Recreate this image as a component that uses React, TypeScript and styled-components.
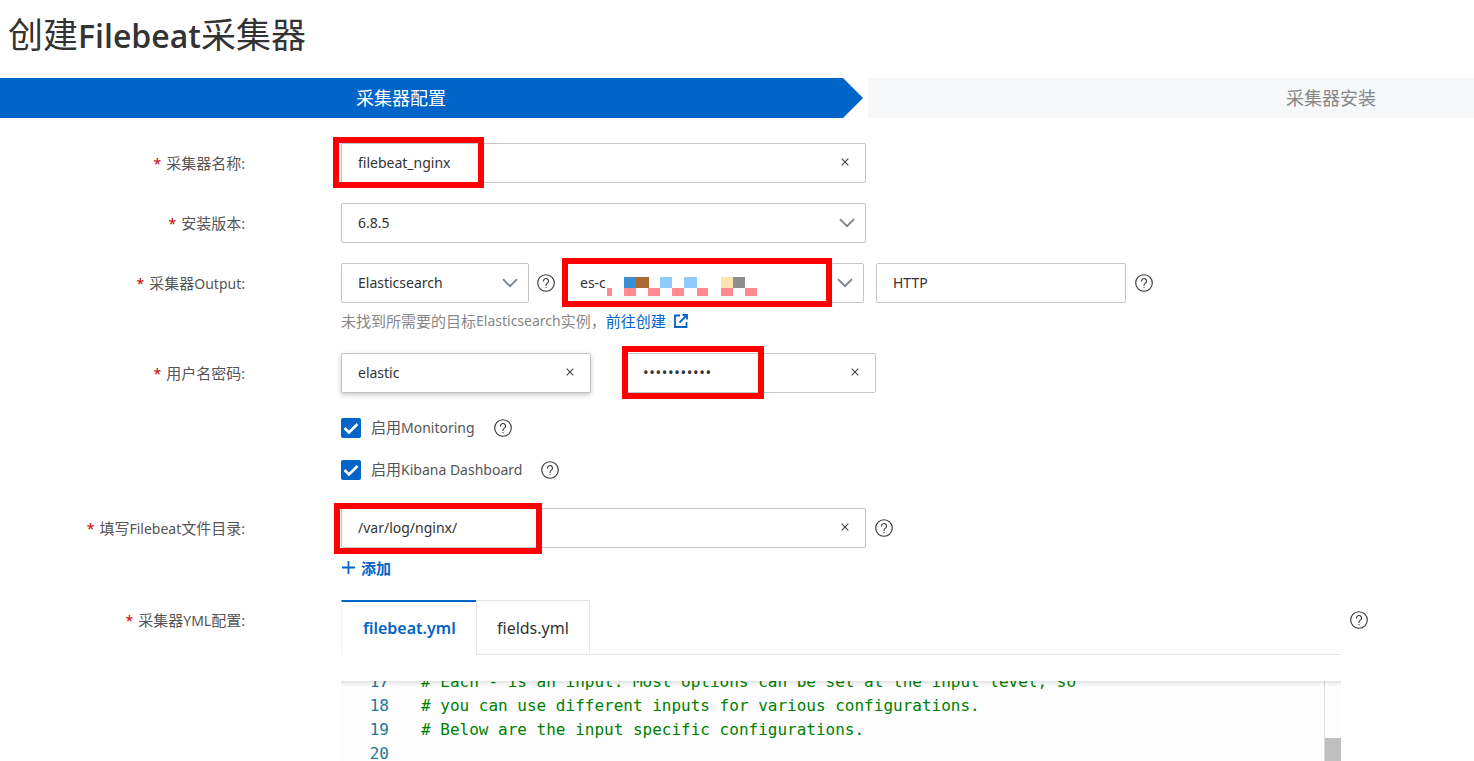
import { FC, ReactNode } from 'react'
import styled, { createGlobalStyle } from 'styled-components'

const GlobalStyle = createGlobalStyle`
    html, body {
        margin: 0;
        height: 761px;
        overflow: hidden;
        background: white;
        font-family: "Noto Sans", "Noto Sans CJK SC", sans-serif;
        color: #333;
    }
`

const Title = styled.h1`
    margin: 0;
    height: 78px;
    padding: 12px 0 0 8px;
    box-sizing: border-box;
    font-family: "Open Sans", "Noto Sans CJK SC", sans-serif;
    font-size: 35px;
    line-height: 46px;
    font-weight: 400;
    color: #333;
`

const TitleLatin = styled.span`
    font-size: 32px;
    font-weight: 600;
`

const Cjk = styled.span`
    font-size: 15px;
`

const Steps = styled.div`
    display: flex;
    gap: 5px;
    height: 40px;
`

const ActiveStep = styled.div`
    width: 863px;
    padding-left: 356px;
    box-sizing: border-box;
    background: #0064c8;
    color: white;
    font-size: 18px;
    line-height: 40px;
    clip-path: polygon(0 0, 843px 0, 100% 50%, 843px 100%, 0 100%);
`

const PendingStep = styled.div`
    flex: 1;
    padding-left: 418px;
    background: #f7f8fa;
    color: #888;
    font-size: 18px;
    line-height: 40px;
`

const Form = styled.div`
    padding-top: 25px;
`

const Row = styled.div<{ $mb: number }>`
    display: grid;
    grid-template-columns: 245px 1fr;
    column-gap: 96px;
    height: 40px;
    margin-bottom: ${p => p.$mb}px;
`

const Label = styled.div`
    height: 40px;
    text-align: right;
    font-size: 14px;
    line-height: 40px;
    color: #555;
`

const Star = styled.span`
    color: #c80000;
    margin-right: 5px;
`

const Controls = styled.div`
    display: flex;
    align-items: center;
`

const Field = styled.div<{ $width: number, $ml?: number, $raised?: boolean }>`
    position: relative;
    display: flex;
    align-items: center;
    justify-content: space-between;
    width: ${p => p.$width}px;
    height: 40px;
    margin-left: ${p => p.$ml || 0}px;
    padding: 0 16px 2px 16px;
    box-sizing: border-box;
    border: 1px solid #c0c6cc;
    border-radius: 2px;
    background: white;
    font-size: 14px;
    color: #333;
    box-shadow: ${p => p.$raised ? '0 2px 5px rgba(0, 0, 0, 0.22)' : 'none'};
`

const Dots = styled.span`
    font-size: 15px;
    letter-spacing: 0.6px;
`

const RedBox = styled.div<{ $left: number, $top: number, $width: number, $height: number }>`
    position: absolute;
    left: ${p => p.$left}px;
    top: ${p => p.$top}px;
    width: ${p => p.$width}px;
    height: ${p => p.$height}px;
    box-sizing: border-box;
    border: 6px solid #ff0000;
`

const Mosaic = styled.svg`
    position: absolute;
    left: 2px;
    top: -1px;
`

const HelpSlot = styled.span<{ $ml: number }>`
    display: flex;
    margin-left: ${p => p.$ml}px;
`

const Hint = styled.div`
    height: 20px;
    margin: 8px 0 22px 341px;
    display: flex;
    align-items: center;
    font-size: 14px;
    line-height: 20px;
    color: #888;
`

const Link = styled.span`
    color: #0064c8;
    margin-right: 8px;
`

const CheckRow = styled.div<{ $mb: number }>`
    display: flex;
    align-items: center;
    height: 21px;
    margin: 0 0 ${p => p.$mb}px 341px;
    font-size: 14px;
    color: #555;
`

const CheckBox = styled.span`
    display: flex;
    align-items: center;
    justify-content: center;
    width: 20px;
    height: 20px;
    margin-right: 10px;
    border-radius: 2px;
    background: #0064c8;
`

const CheckText = styled.span`
    margin-top: -2px;
`

const AddButton = styled.div`
    display: flex;
    align-items: center;
    gap: 6px;
    height: 20px;
    margin: 9px 0 23px 342px;
    font-size: 15px;
    font-weight: 600;
    color: #0064c8;
`

const YmlRow = styled.div`
    display: grid;
    grid-template-columns: 245px 1000px 18px;
    column-gap: 96px;
`

const YmlBody = styled.div`
    grid-column: 2;
`

const YmlHelp = styled.div`
    grid-column: 3;
    margin-left: -87px;
    padding-top: 11px;
`

const Tabs = styled.div`
    display: flex;
    height: 55px;
    border-bottom: 1px solid #e3e5e8;
    box-sizing: border-box;
`

const Tab = styled.div<{ $active?: boolean, $width: number }>`
    width: ${p => p.$width}px;
    height: 55px;
    box-sizing: border-box;
    padding-left: ${p => p.$active ? 21 : 20}px;
    line-height: ${p => p.$active ? 52 : 54}px;
    font-size: 16px;
    font-weight: ${p => p.$active ? 600 : 400};
    color: ${p => p.$active ? '#0064c8' : '#333'};
    background: white;
    border-left: 1px solid ${p => p.$active ? '#f0f1f3' : '#e3e5e8'};
    border-top: ${p => p.$active ? '2px solid #0064c8' : '1px solid #e3e5e8'};
    border-bottom: ${p => p.$active ? 'none' : '1px solid #e3e5e8'};
    border-right: ${p => p.$active ? 'none' : '1px solid #e3e5e8'};
`

const Editor = styled.div`
    position: relative;
    display: flex;
    height: 80px;
    margin-top: 26px;
    overflow: hidden;
    background: #fdfdfd;
`

const EditorShadow = styled.div`
    position: absolute;
    left: 0;
    right: 0;
    top: 0;
    height: 5px;
    background: linear-gradient(rgba(0, 0, 0, 0.1), rgba(0, 0, 0, 0));
`

const Lines = styled.div`
    flex: 1;
    margin-top: -11px;
    font-family: "DejaVu Sans Mono", monospace;
    font-size: 16px;
    line-height: 24px;
`

const Line = styled.div`
    display: flex;
    height: 24px;
    white-space: pre;
`

const LineNumber = styled.span`
    width: 48px;
    margin-right: 32px;
    text-align: right;
    color: #237893;
`

const Comment = styled.span`
    color: #008000;
`

const ScrollTrack = styled.div`
    width: 17px;
    box-sizing: border-box;
    padding-top: 57px;
    border-left: 1px solid #dcdcdc;
`

const ScrollThumb = styled.div`
    height: 40px;
    background: #bfbfbf;
`

const ChevronIcon = styled.svg`
    margin-right: -6px;
    margin-top: 2px;
`

const Help: FC = () => (
    <svg width="18" height="18" viewBox="0 0 18 18" fill="none" stroke="#333" strokeWidth="1.1">
        <circle cx="9" cy="9" r="8.3" />
        <path d="M6.5 7a2.5 2.5 0 1 1 3.9 2.1c-.9.6-1.4 1.1-1.4 2.3" strokeLinecap="round" />
        <circle cx="9" cy="13.6" r=".7" fill="#333" stroke="none" />
    </svg>
)

const Chevron: FC = () => (
    <ChevronIcon width="16" height="10" viewBox="0 0 16 10" fill="none" stroke="#77848f" strokeWidth="1.8">
        <path d="M1 1.2l7 7 7-7" />
    </ChevronIcon>
)

const Clear: FC = () => (
    <svg width="8" height="8" viewBox="0 0 8 8" fill="none" stroke="#444" strokeWidth="1.1">
        <path d="M.7.7l6.6 6.6M7.3.7L.7 7.3" />
    </svg>
)

const Check: FC = () => (
    <svg width="16" height="12" viewBox="0 0 16 12" fill="none" stroke="white" strokeWidth="2.6">
        <path d="M1.500 6l4.500 4.500 8.500-8.500" />
    </svg>
)

const ExternalLink: FC = () => (
    <svg width="14" height="14" viewBox="0 0 14 14" fill="none" stroke="#0064c8" strokeWidth="1.8">
        <path d="M6 1.5H1v11.5h11.500V8" />
        <path d="M5.500 8.500L13 1M8.500 1H13v4.500" />
    </svg>
)

const Plus: FC = () => (
    <svg width="13" height="13" viewBox="0 0 13 13" stroke="#0064c8" strokeWidth="1.8">
        <path d="M6.500 0v13M0 6.500h13" />
    </svg>
)

// blurred out instance id in the screenshot, coords are relative to the field
const mosaic = [
    [58, 14, 12, 11, '#3a8fd0'], [70, 14, 13, 11, '#a96a33'], [94, 14, 12, 11, '#8ecbff'],
    [118, 14, 13, 11, '#8ecbff'], [155, 14, 12, 11, '#fde4ae'], [167, 14, 12, 11, '#8e8e8c'],
    [41, 25, 5, 8, '#ff8a8f'], [58, 25, 12, 8, '#ff8a8f'], [82, 25, 12, 8, '#ff8a8f'],
    [106, 25, 12, 8, '#ff8a8f'], [131, 25, 11, 8, '#ff8a8f'], [155, 25, 12, 8, '#ff8a8f'],
    [179, 25, 12, 8, '#ff8a8f'],
] as const

const FormLabel: FC<{ children: ReactNode }> = ({ children }) => (
    <Label><Star>*</Star>{children}</Label>
)

const App: FC = () => (
    <>
        <GlobalStyle />
        <Title>创建<TitleLatin>Filebeat</TitleLatin>采集器</Title>
        <Steps>
            <ActiveStep>采集器配置</ActiveStep>
            <PendingStep>采集器安装</PendingStep>
        </Steps>
        <Form>
            <Row $mb={20}>
                <FormLabel><Cjk>采集器名称</Cjk>:</FormLabel>
                <Controls>
                    <Field $width={525}>
                        filebeat_nginx
                        <Clear />
                        <RedBox $left={-9} $top={-7} $width={151} $height={51} />
                    </Field>
                </Controls>
            </Row>
            <Row $mb={20}>
                <FormLabel><Cjk>安装版本</Cjk>:</FormLabel>
                <Controls>
                    <Field $width={525}>6.8.5<Chevron /></Field>
                </Controls>
            </Row>
            <Row $mb={0}>
                <FormLabel><Cjk>采集器</Cjk>Output:</FormLabel>
                <Controls>
                    <Field $width={188}>Elasticsearch<Chevron /></Field>
                    <HelpSlot $ml={8}><Help /></HelpSlot>
                    <Field $width={301} $ml={8}>
                        es-c
                        <Chevron />
                        <Mosaic width="200" height="40">
                            {mosaic.map(([x, y, w, h, fill]) => (
                                <rect key={`${x}-${y}`} x={x} y={y} width={w} height={h} fill={fill} />
                            ))}
                        </Mosaic>
                        <RedBox $left={-2} $top={-6} $width={270} $height={49} />
                    </Field>
                    <Field $width={250} $ml={12}>HTTP</Field>
                    <HelpSlot $ml={9}><Help /></HelpSlot>
                </Controls>
            </Row>
            <Hint>
                <Cjk>未找到所需要的目标</Cjk>Elasticsearch<Cjk>实例，</Cjk>
                <Link><Cjk>前往创建</Cjk></Link>
                <ExternalLink />
            </Hint>
            <Row $mb={24}>
                <FormLabel><Cjk>用户名密码</Cjk>:</FormLabel>
                <Controls>
                    <Field $width={250} $raised>elastic<Clear /></Field>
                    <Field $width={250} $ml={35}>
                        <Dots>•••••••••••</Dots>
                        <Clear />
                        <RedBox $left={-5} $top={-8} $width={142} $height={53} />
                    </Field>
                </Controls>
            </Row>
            <CheckRow $mb={21}>
                <CheckBox><Check /></CheckBox>
                <CheckText><Cjk>启用</Cjk>Monitoring</CheckText>
                <HelpSlot $ml={19}><Help /></HelpSlot>
            </CheckRow>
            <CheckRow $mb={28}>
                <CheckBox><Check /></CheckBox>
                <CheckText><Cjk>启用</Cjk>Kibana Dashboard</CheckText>
                <HelpSlot $ml={19}><Help /></HelpSlot>
            </CheckRow>
            <Row $mb={0}>
                <FormLabel><Cjk>填写</Cjk>Filebeat<Cjk>文件目录</Cjk>:</FormLabel>
                <Controls>
                    <Field $width={525}>
                        /var/log/nginx/
                        <Clear />
                        <RedBox $left={-8} $top={-6} $width={208} $height={51} />
                    </Field>
                    <HelpSlot $ml={9}><Help /></HelpSlot>
                </Controls>
            </Row>
            <AddButton><Plus />添加</AddButton>
            <YmlRow>
                <FormLabel><Cjk>采集器</Cjk>YML<Cjk>配置</Cjk>:</FormLabel>
                <YmlBody>
                    <Tabs>
                        <Tab $active $width={135}>filebeat.yml</Tab>
                        <Tab $width={114}>fields.yml</Tab>
                    </Tabs>
                    <Editor>
                        <Lines>
                            <Line><LineNumber>17</LineNumber><Comment># Each - is an input. Most options can be set at the input level, so</Comment></Line>
                            <Line><LineNumber>18</LineNumber><Comment># you can use different inputs for various configurations.</Comment></Line>
                            <Line><LineNumber>19</LineNumber><Comment># Below are the input specific configurations.</Comment></Line>
                            <Line><LineNumber>20</LineNumber></Line>
                        </Lines>
                        <ScrollTrack><ScrollThumb /></ScrollTrack>
                        <EditorShadow />
                    </Editor>
                </YmlBody>
                <YmlHelp><Help /></YmlHelp>
            </YmlRow>
        </Form>
    </>
)

export default App
